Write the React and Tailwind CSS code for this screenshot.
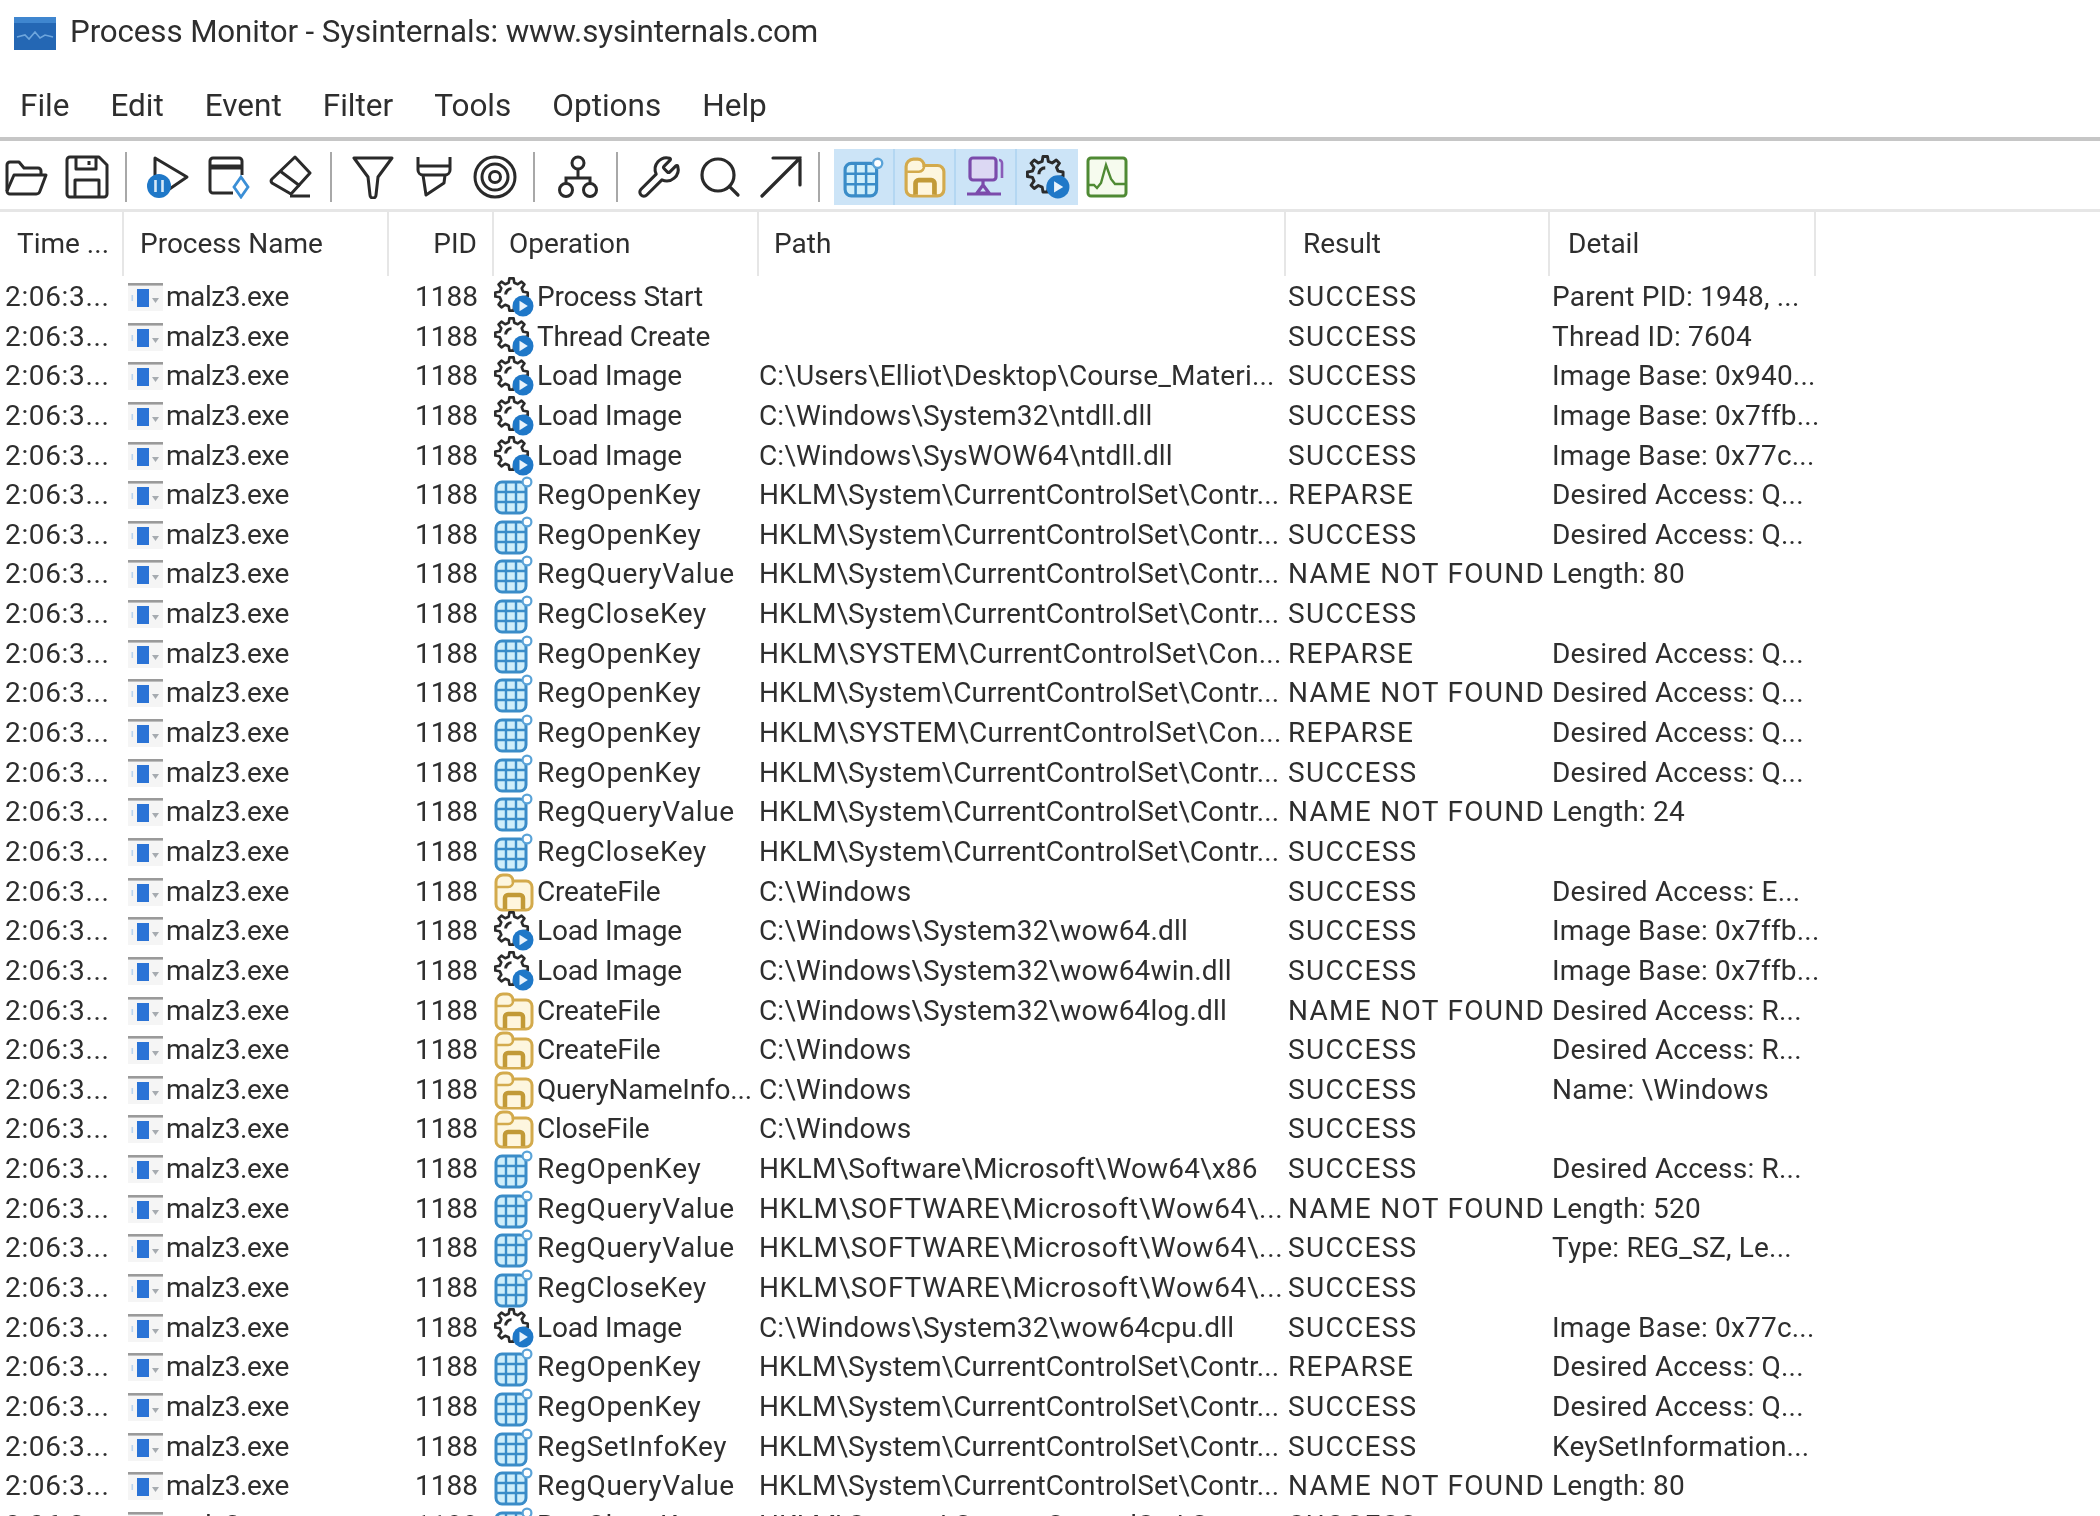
import React from 'react';
import { Wrench, Search } from 'lucide-react';

const P_SYS = 'HKLM\\System\\CurrentControlSet\\Contr...';
const P_UP = 'HKLM\\SYSTEM\\CurrentControlSet\\Con...';
const P_SW = 'HKLM\\SOFTWARE\\Microsoft\\Wow64\\...';
const WIN = 'C:\\Windows';
const OK = 'SUCCESS';
const NF = 'NAME NOT FOUND';
const DQ = 'Desired Access: Q...';
const DR = 'Desired Access: R...';

const rows = [
  ['gear', 'Process Start', '', OK, 'Parent PID: 1948, ...'],
  ['gear', 'Thread Create', '', OK, 'Thread ID: 7604'],
  ['gear', 'Load Image', 'C:\\Users\\Elliot\\Desktop\\Course_Materi...', OK, 'Image Base: 0x940...'],
  ['gear', 'Load Image', 'C:\\Windows\\System32\\ntdll.dll', OK, 'Image Base: 0x7ffb...'],
  ['gear', 'Load Image', 'C:\\Windows\\SysWOW64\\ntdll.dll', OK, 'Image Base: 0x77c...'],
  ['reg', 'RegOpenKey', P_SYS, 'REPARSE', DQ],
  ['reg', 'RegOpenKey', P_SYS, OK, DQ],
  ['reg', 'RegQueryValue', P_SYS, NF, 'Length: 80'],
  ['reg', 'RegCloseKey', P_SYS, OK, ''],
  ['reg', 'RegOpenKey', P_UP, 'REPARSE', DQ],
  ['reg', 'RegOpenKey', P_SYS, NF, DQ],
  ['reg', 'RegOpenKey', P_UP, 'REPARSE', DQ],
  ['reg', 'RegOpenKey', P_SYS, OK, DQ],
  ['reg', 'RegQueryValue', P_SYS, NF, 'Length: 24'],
  ['reg', 'RegCloseKey', P_SYS, OK, ''],
  ['file', 'CreateFile', WIN, OK, 'Desired Access: E...'],
  ['gear', 'Load Image', 'C:\\Windows\\System32\\wow64.dll', OK, 'Image Base: 0x7ffb...'],
  ['gear', 'Load Image', 'C:\\Windows\\System32\\wow64win.dll', OK, 'Image Base: 0x7ffb...'],
  ['file', 'CreateFile', 'C:\\Windows\\System32\\wow64log.dll', NF, DR],
  ['file', 'CreateFile', WIN, OK, DR],
  ['file', 'QueryNameInfo...', WIN, OK, 'Name: \\Windows'],
  ['file', 'CloseFile', WIN, OK, ''],
  ['reg', 'RegOpenKey', 'HKLM\\Software\\Microsoft\\Wow64\\x86', OK, DR],
  ['reg', 'RegQueryValue', P_SW, NF, 'Length: 520'],
  ['reg', 'RegQueryValue', P_SW, OK, 'Type: REG_SZ, Le...'],
  ['reg', 'RegCloseKey', P_SW, OK, ''],
  ['gear', 'Load Image', 'C:\\Windows\\System32\\wow64cpu.dll', OK, 'Image Base: 0x77c...'],
  ['reg', 'RegOpenKey', P_SYS, 'REPARSE', DQ],
  ['reg', 'RegOpenKey', P_SYS, OK, DQ],
  ['reg', 'RegSetInfoKey', P_SYS, OK, 'KeySetInformation...'],
  ['reg', 'RegQueryValue', P_SYS, NF, 'Length: 80'],
  ['reg', 'RegCloseKey', P_SYS, OK, ''],
];

// cog outline with eight square teeth
const gearPath = (cx, cy, outer, inner, teeth) => {
  const pts = [];
  const step = (Math.PI * 2) / teeth;
  for (let i = 0; i < teeth; i++) {
    const a = i * step;
    const w = step * 0.2;
    pts.push([a - w * 1.5, inner], [a - w * 0.8, outer], [a + w * 0.8, outer], [a + w * 1.5, inner]);
  }
  return 'M' + pts.map(([a, r]) => `${(cx + r * Math.cos(a)).toFixed(2)} ${(cy + r * Math.sin(a)).toFixed(2)}`).join('L') + 'z';
};
const GEAR = gearPath(10.5, 10.5, 9.8, 7.2, 8);

const GearIcon = ({ className }) => (
  <svg viewBox="0 0 24 24" fill="none" className={className}>
    <path d={GEAR} stroke="#2b2b2b" strokeWidth="1.6" strokeLinejoin="round" />
    <path d="M10.5 7a3.5 3.5 0 0 0-3.5 3.500" stroke="#2b2b2b" strokeWidth="1.700" />
    <circle cx="17.400" cy="17.400" r="6.300" fill="#1f78c8" />
    <path d="M15.300 14.300v6.200l5-3.100z" fill="#e8f3fc" />
  </svg>
);

const RegIcon = ({ className }) => (
  <svg viewBox="0 0 40 40" fill="none" className={className}>
    <rect x="2" y="7" width="30" height="31" rx="6" fill="#cfeefa" stroke="#3a8cc8" strokeWidth="3" />
    <path d="M2 17h30M2 27h30M12 7v31M22 7v31" stroke="#3a8cc8" strokeWidth="2.4" />
    <circle cx="33" cy="7" r="4.400" fill="#ffffff" stroke="#5aa3d8" strokeWidth="2.2" />
  </svg>
);

const FileIcon = ({ className }) => (
  <svg viewBox="0 0 40 40" fill="none" className={className}>
    <path d="M2 10a7 7 0 0 1 7-7h4a6 6 0 0 1 6 6h13a6 6 0 0 1 6 6v17a6 6 0 0 1-6 6H8a6 6 0 0 1-6-6z" fill="#fdf6df" stroke="#d3aa4c" strokeWidth="3" />
    <path d="M3 15h11a5 5 0 0 0 5-6" stroke="#d3aa4c" strokeWidth="2.4" />
    <path d="M11 37V26a3 3 0 0 1 3-3h12a3 3 0 0 1 3 3v11" fill="#fff6dd" stroke="#c29a37" strokeWidth="4.500" />
  </svg>
);

const NetIcon = ({ className }) => (
  <svg viewBox="0 0 44 44" fill="none" className={className}>
    <path d="M35 5a3 3 0 0 1 3 3v15" stroke="#8a5cb8" strokeWidth="2.6" />
    <rect x="6" y="3" width="26" height="22" rx="3" fill="#dcd8f3" stroke="#7b4bab" strokeWidth="3.2" />
    <path d="M19 25v5M13 38l6-8 6 8zM3 39h34" stroke="#7b4bab" strokeWidth="3.2" />
  </svg>
);

const ProfileIcon = ({ className }) => (
  <svg viewBox="0 0 44 44" fill="none" className={className}>
    <rect x="3" y="3" width="38" height="38" rx="3" fill="#f6fbee" stroke="#4f8a34" strokeWidth="3" />
    <path d="M4 30h5l3 3 4-5 5-18 5 14 4 5h10" stroke="#4f8a34" strokeWidth="2.400" />
  </svg>
);

const ProcIcon = () => (
  <svg viewBox="0 0 35 28" className="w-[35px] h-[28px] shrink-0">
    <rect x="0" y="0" width="35" height="28" fill="#f5f5f5" />
    <rect x="0" y="0" width="35" height="2.600" fill="#9a9a9a" />
    <rect x="9" y="6" width="12" height="18" fill="#2a73d6" />
    <rect x="3.500" y="12" width="1.600" height="6" fill="#b9d4ee" />
    <path d="M24 15h7l-3.500 5z" fill="#a6abb0" />
  </svg>
);

const OpenIcon = () => (
  <svg viewBox="0 0 44 44" fill="none" stroke="#2a2a2a" strokeWidth="3" strokeLinejoin="round" className="w-[44px] h-[44px]">
    <path d="M2 36V10a3 3 0 0 1 3-3h9l5 6h14a3 3 0 0 1 3 3v4" />
    <path d="M2 36l7-16h32l-6 16a4 4 0 0 1-4 3H5a3 3 0 0 1-3-3z" />
  </svg>
);

const SaveIcon = () => (
  <svg viewBox="0 0 44 44" fill="none" stroke="#2a2a2a" strokeWidth="3" strokeLinejoin="round" className="w-[44px] h-[44px]">
    <path d="M5 2h29l8 8v29a3 3 0 0 1-3 3H5a3 3 0 0 1-3-3V5a3 3 0 0 1 3-3z" />
    <path d="M11 2v12h20V2M24 6v4M10 42V25h24v17" />
  </svg>
);

const CaptureIcon = () => (
  <svg viewBox="0 0 44 44" fill="none" className="w-[44px] h-[44px]">
    <path d="M9 22V3l32 19-19 13" stroke="#2a2a2a" strokeWidth="3" strokeLinejoin="round" />
    <circle cx="13" cy="31" r="12" fill="#1f78c8" />
    <path d="M9.500 25v12M16.500 25v12" stroke="#d6e9f8" strokeWidth="2.600" />
  </svg>
);

const ScrollIcon = () => (
  <svg viewBox="0 0 44 44" fill="none" className="w-[44px] h-[44px]">
    <path d="M26 38H6a3 3 0 0 1-3-3V6a3 3 0 0 1 3-3h26a3 3 0 0 1 3 3v14" stroke="#2a2a2a" strokeWidth="3" />
    <path d="M3 12h32" stroke="#2a2a2a" strokeWidth="5" />
    <path d="M34 22l7 10-7 10-7-10z" fill="#ffffff" stroke="#3b8fd6" strokeWidth="2.800" />
  </svg>
);

const EraserIcon = () => (
  <svg viewBox="0 0 44 44" fill="none" stroke="#2a2a2a" strokeWidth="3" strokeLinejoin="round" className="w-[44px] h-[44px]">
    <path d="M27 2l15 16-19 21L4 28a3 3 0 0 1 0-4z" />
    <path d="M12 16l20 15M22 41h20" />
  </svg>
);

const FilterIcon = () => (
  <svg viewBox="0 0 44 44" fill="none" stroke="#2a2a2a" strokeWidth="3" strokeLinejoin="round" className="w-[44px] h-[44px]">
    <path d="M3 3h38L27 22l-2 18a3 3 0 0 1-6 0l-2-18z" />
  </svg>
);

const MarkerIcon = () => (
  <svg viewBox="0 0 44 44" fill="none" stroke="#2a2a2a" strokeWidth="3" strokeLinejoin="round" className="w-[44px] h-[44px]">
    <path d="M6 2v13a5 5 0 0 0 5 5h22a5 5 0 0 0 5-5V2" />
    <path d="M6 11h32M11 20l3 20 18-12 1-8" />
  </svg>
);

const TargetIcon = () => (
  <svg viewBox="0 0 44 44" fill="none" stroke="#2a2a2a" strokeWidth="3" className="w-[44px] h-[44px]">
    <circle cx="22" cy="22" r="20" />
    <circle cx="22" cy="22" r="13" />
    <circle cx="22" cy="22" r="5.500" />
  </svg>
);

const TreeIcon = () => (
  <svg viewBox="0 0 44 44" fill="none" stroke="#2a2a2a" strokeWidth="3" className="w-[44px] h-[44px]">
    <circle cx="22" cy="8" r="6" />
    <circle cx="10" cy="35" r="6.500" />
    <circle cx="34" cy="35" r="6.500" />
    <path d="M22 14v9M10 28v-5h24v5" />
  </svg>
);

const JumpIcon = () => (
  <svg viewBox="0 0 44 44" fill="none" stroke="#2a2a2a" strokeWidth="3.200" strokeLinecap="round" className="w-[44px] h-[44px]">
    <path d="M3 41L41 3M14 3h27v27" />
  </svg>
);

const Tool = ({ children, width = 'w-[61px]' }) => (
  <div className={`${width} h-[44px] flex items-center justify-center shrink-0`}>{children}</div>
);

const Sep = ({ className }) => <div className={`w-[2px] h-[50px] bg-[#a8a8a8] shrink-0 ${className}`} />;

const ActiveTool = ({ children, last }) => (
  <div className={`w-[61px] h-[56px] flex items-center justify-center bg-[#cce4f7] ${last ? '' : 'border-r-2 border-[#b4d7f2]'}`}>
    {children}
  </div>
);

const Head = ({ children, className = '' }) => (
  <div className={`h-[64px] flex items-center border-r-2 border-[#e6e6e6] whitespace-nowrap ${className}`}>{children}</div>
);

const pathTracking = path => {
  if (path === P_SYS) return 'tracking-[0.1px]';
  if (path === P_SW) return 'tracking-[0.65px]';
  if (path === P_UP) return 'tracking-[0.25px]';
  return 'tracking-[0.15px]';
};

const Row = ({ row }) => {
  const [kind, op, path, result, detail] = row;
  const Icon = kind === 'gear' ? GearIcon : kind === 'reg' ? RegIcon : FileIcon;
  return (
    <div className="grid grid-cols-[123px_265px_105px_265px_527px_264px_266px] h-[39.65px] items-center text-[28px] leading-none text-[#2e2e2e] whitespace-nowrap">
      <div className="pl-[5px] tracking-[0.65px]">2:06:3...</div>
      <div className="pl-[5px] flex items-center gap-[3px]">
        <ProcIcon />
        <span className="tracking-[-0.45px]">malz3.exe</span>
      </div>
      <div className="pr-[15px] text-right">1188</div>
      <div className="pl-[1px] flex items-center gap-[3px]">
        <Icon className="w-[40px] h-[40px] shrink-0" />
        <span className={kind === 'reg' ? 'tracking-[0.6px]' : 'tracking-[-0.2px]'}>{op}</span>
      </div>
      <div className={`pl-[1px] ${pathTracking(path)}`}>{path}</div>
      <div className="pl-[3px] tracking-[1.3px]">{result}</div>
      <div className="pl-[3px] tracking-[0.2px]">{detail}</div>
    </div>
  );
};

const menus = ['File', 'Edit', 'Event', 'Filter', 'Tools', 'Options', 'Help'];

export default function App() {
  return (
    <div className="w-[2100px] h-[1516px] overflow-hidden bg-white font-[Roboto,sans-serif] text-[#2e2e2e] blur-[0.7px]">
      <div className="h-[66px] flex items-center pl-[14px] gap-[14px]">
        <svg viewBox="0 0 42 33" className="w-[42px] h-[33px]">
          <rect width="42" height="33" fill="#2467b4" />
          <rect width="42" height="6" fill="#3f86cf" />
          <path d="M3 20l8-2 4 4 6-7 5 6 5-3 8 2" stroke="#6ea6dd" strokeWidth="1.600" fill="none" />
        </svg>
        <span className="text-[31.300px] tracking-[-0.1px] -translate-y-[1px]">Process Monitor - Sysinternals: www.sysinternals.com</span>
      </div>

      <div className="h-[75px] pl-[20px] pt-[8px] flex items-center gap-[41px] text-[31.500px] border-b-4 border-[#c6c6c6]">
        {menus.map(m => <span key={m}>{m}</span>)}
      </div>

      <div className="h-[71px] pt-[3px] flex items-center border-b-[3px] border-[#e6e6e6]">
        <Tool width="w-[54px]"><OpenIcon /></Tool>
        <Tool width="w-[66px]"><SaveIcon /></Tool>
        <Sep className="ml-[5px] mr-[10px]" />
        <Tool><CaptureIcon /></Tool>
        <Tool><ScrollIcon /></Tool>
        <Tool><EraserIcon /></Tool>
        <Sep className="ml-[10px] mr-[10px]" />
        <Tool><FilterIcon /></Tool>
        <Tool><MarkerIcon /></Tool>
        <Tool><TargetIcon /></Tool>
        <Sep className="ml-[8px] mr-[12px]" />
        <Tool><TreeIcon /></Tool>
        <Sep className="ml-[8px] mr-[10px]" />
        <Tool><Wrench className="w-[46px] h-[46px] text-[#2a2a2a]" strokeWidth={1.6} /></Tool>
        <Tool><Search className="w-[48px] h-[48px] text-[#2a2a2a]" strokeWidth={1.6} /></Tool>
        <Tool><JumpIcon /></Tool>
        <Sep className="ml-[7px] mr-[14px]" />
        <ActiveTool><RegIcon className="w-[42px] h-[42px]" /></ActiveTool>
        <ActiveTool><FileIcon className="w-[42px] h-[42px]" /></ActiveTool>
        <ActiveTool><NetIcon className="w-[44px] h-[44px]" /></ActiveTool>
        <ActiveTool last><GearIcon className="w-[44px] h-[44px]" /></ActiveTool>
        <div className="ml-[7px] flex items-center"><ProfileIcon className="w-[44px] h-[44px]" /></div>
      </div>

      <div className="grid grid-cols-[124px_265px_105px_265px_527px_264px_266px] text-[28px] text-[#2e2e2e]">
        <Head className="pl-[17px]">Time ...</Head>
        <Head className="pl-[16px]">Process Name</Head>
        <Head className="justify-end pr-[15px]">PID</Head>
        <Head className="pl-[15px]">Operation</Head>
        <Head className="pl-[15px]">Path</Head>
        <Head className="pl-[17px]">Result</Head>
        <Head className="pl-[18px]">Detail</Head>
      </div>

      <div className="pt-[1px]">
        {rows.map((row, i) => <Row key={i} row={row} />)}
      </div>
    </div>
  );
}
